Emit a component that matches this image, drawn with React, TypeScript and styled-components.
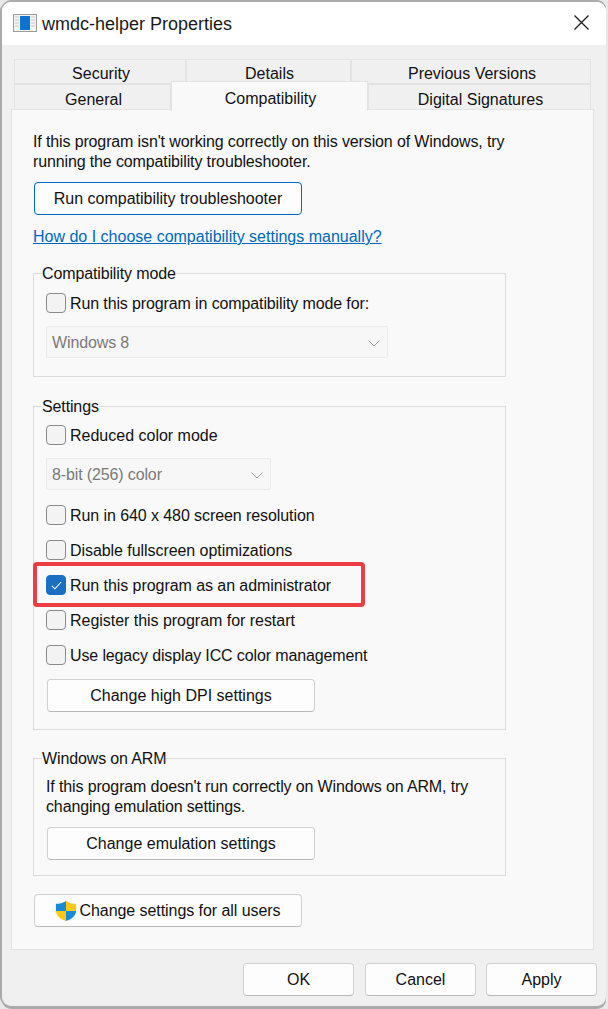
import styled, { createGlobalStyle } from "styled-components";

const GlobalStyle = createGlobalStyle`
	html, body {
		margin: 0;
		padding: 0;
		width: 608px;
		height: 1009px;
		overflow: hidden;
		background: #e8e8e8;
		font-family: "Liberation Sans", Arial, sans-serif;
		font-size: 16px;
		color: #111111;
	}
`;

const Window = styled.div`
	display: flex;
	flex-direction: column;
	box-sizing: border-box;
	width: 604px;
	height: 1004px;
	margin: 2px 0 0 2px;
	border-radius: 9px;
	background: #f0f0f0;
	box-shadow: -2px 0 0 #aaaaaa, 0 -2px 0 #aaaaaa, 0 3px 0 #aaaaaa;
	overflow: hidden;
`;

const TitleBar = styled.div`
	display: flex;
	align-items: center;
	box-sizing: border-box;
	height: 43px;
	padding: 0 17px 2px 11px;
	background: #ffffff;
`;

const Title = styled.span`
	flex: 1;
	margin-left: 5px;
	padding-top: 4px;
	font-size: 18px;
	color: #1a1a1a;
`;

const Content = styled.div`
	display: flex;
	flex-direction: column;
	flex: 1;
	padding: 14px 12px 10px 9px;
`;

const TabRow = styled.div`
	display: flex;
	height: 25px;
	padding: 0 3px;
`;

const LowerTabRow = styled(TabRow)`
	height: 26px;
`;

const Tab = styled.div<{ $width: number; $active?: boolean; $lower?: boolean }>`
	display: flex;
	align-items: center;
	justify-content: center;
	position: relative;
	z-index: ${(props) => (props.$active ? 1 : 0)};
	box-sizing: border-box;
	width: ${(props) => props.$width}px;
	height: ${(props) => (props.$active ? "30px" : "100%")};
	margin-top: ${(props) => (props.$active ? "-3px" : "0")};
	padding: ${(props) => (props.$lower ? "6px" : "4px")} 0 0 2px;
	border: 1px solid #e3e3e3;
	border-bottom: ${(props) => (props.$active ? "none" : "1px solid #e3e3e3")};
	background: ${(props) => (props.$active ? "#f9f9f9" : "#f0f0f0")};
	line-height: 24px;
	overflow: hidden;
`;

const Panel = styled.div`
	display: flex;
	flex-direction: column;
	align-items: flex-start;
	box-sizing: border-box;
	width: 583px;
	height: 841px;
	margin-top: -1px;
	padding: 22px 21px 0 21px;
	background: #f9f9f9;
	border: 1px solid #e3e3e3;
`;

const Paragraph = styled.p`
	margin: 0;
	line-height: 20px;
	letter-spacing: -0.13px;
`;

const Button = styled.button<{ $width: number; $primary?: boolean }>`
	display: flex;
	align-items: center;
	justify-content: center;
	box-sizing: border-box;
	width: ${(props) => props.$width}px;
	height: 33px;
	padding: 0;
	border: 1px solid ${(props) => (props.$primary ? "#0067c0" : "#d0d0d0")};
	border-bottom-color: ${(props) => (props.$primary ? "#0067c0" : "#b8b8b8")};
	border-radius: 4px;
	background: #fdfdfd;
	font-family: inherit;
	font-size: 16px;
	color: #111111;
`;

const TroubleshootButton = styled(Button)`
	margin: 10px 0 0 1px;
`;

const HelpLink = styled.a`
	margin-top: 12px;
	line-height: 20px;
	color: #0067c0;
	text-decoration: underline;
`;

const Group = styled.fieldset<{ $height: number; $top: number }>`
	display: flex;
	flex-direction: column;
	align-items: flex-start;
	box-sizing: border-box;
	width: 473px;
	height: ${(props) => props.$height}px;
	margin: ${(props) => props.$top}px 0 0 0;
	padding: 0 0 0 12px;
	border: 1px solid #dcdcdc;
`;

const Legend = styled.legend`
	margin-left: -4px;
	padding: 0;
	line-height: 20px;
	letter-spacing: -0.13px;
	transform: translateY(1px);
`;

const CheckRow = styled.div<{ $top: number }>`
	display: flex;
	align-items: center;
	gap: 4px;
	height: 20px;
	margin-top: ${(props) => props.$top}px;
`;

const CheckLabel = styled.span<{ $tracking: number }>`
	padding-top: 2px;
	letter-spacing: ${(props) => props.$tracking}px;
`;

const CheckBox = styled.span<{ $checked?: boolean }>`
	display: flex;
	align-items: center;
	justify-content: center;
	box-sizing: border-box;
	width: 20px;
	height: 20px;
	border: 1px solid ${(props) => (props.$checked ? "#1b6ec2" : "#8a8a8a")};
	border-radius: 4px;
	background: ${(props) => (props.$checked ? "#1b6ec2" : "#f3f3f3")};
`;

const Highlight = styled.div`
	position: relative;
`;

const HighlightFrame = styled.div`
	position: absolute;
	left: -13px;
	top: 2px;
	width: 332px;
	height: 45px;
	box-sizing: border-box;
	border: 4px solid #ea3e42;
	border-radius: 4px;
	pointer-events: none;
`;

const Select = styled.div<{ $width: number; $top: number }>`
	display: flex;
	align-items: center;
	justify-content: space-between;
	box-sizing: border-box;
	width: ${(props) => props.$width}px;
	height: 32px;
	margin-top: ${(props) => props.$top}px;
	padding: 2px 7px 0 5px;
	border: 1px solid #ebebeb;
	border-radius: 2px;
	background: #f7f7f7;
	letter-spacing: -0.13px;
	color: #7a7a7a;
`;

const GroupText = styled(Paragraph)`
	margin-top: 9px;
`;

const GroupButton = styled(Button)<{ $top: number }>`
	margin: ${(props) => props.$top}px 0 0 1px;
`;

const UsersButton = styled(Button)`
	gap: 2px;
	margin: 18px 0 0 1px;
	letter-spacing: -0.06px;
`;

const Footer = styled.div`
	display: flex;
	justify-content: flex-end;
	gap: 10px;
	margin: 13px -3px 0 0;
`;

const OkButton = styled(Button)`
	margin-right: 1px;
`;

const Chevron = () => (
	<svg width="12" height="7" viewBox="0 0 12 7" fill="none">
		<path d="M0.5 0.5 L6 6 L11.5 0.5" stroke="#9c9c9c" strokeWidth="1" />
	</svg>
);

const Tick = () => (
	<svg width="11" height="9" viewBox="0 0 11 9" fill="none">
		<path d="M0.8 4.8 L3.9 7.8 L10.2 1" stroke="#ffffff" strokeWidth="1.1" />
	</svg>
);

const CloseIcon = () => (
	<svg width="15" height="15" viewBox="0 0 15 15" fill="none">
		<path d="M0.5 0.5 L14.5 14.5 M14.5 0.5 L0.5 14.5" stroke="#1c1c1c" strokeWidth="1.3" />
	</svg>
);

const AppIcon = () => (
	<svg width="24" height="18" viewBox="0 0 24 18">
		<rect x="0.5" y="0.5" width="23" height="17" fill="#f4f4f4" stroke="#9a9a9a" />
		<path d="M2 3 h4 M2 6 h4 M2 9 h4 M2 12 h4 M18 3 h4 M18 6 h4 M18 9 h4 M18 12 h4" stroke="#c6c6c6" />
		<rect x="7" y="2" width="10" height="14" fill="#0a74d0" />
	</svg>
);

const ShieldIcon = () => (
	<svg width="22" height="22" viewBox="0 0 24 24">
		<path d="M12 1 C9 3 5 4.2 1 4.2 V12 H12 Z" fill="#1a8ad4" />
		<path d="M12 1 C15 3 19 4.2 23 4.2 V12 H12 Z" fill="#fdc915" />
		<path d="M1 12 C1.5 17.5 6 21 12 23 V12 Z" fill="#fdc915" />
		<path d="M23 12 C22.5 17.5 18 21 12 23 V12 Z" fill="#1a8ad4" />
	</svg>
);

const App = () => {
	return (
		<>
			<GlobalStyle />
			<Window>
				<TitleBar>
					<AppIcon />
					<Title>wmdc-helper Properties</Title>
					<CloseIcon />
				</TitleBar>
				<Content>
					<TabRow>
						<Tab $width={172}>Security</Tab>
						<Tab $width={165}>Details</Tab>
						<Tab $width={240}>Previous Versions</Tab>
					</TabRow>
					<LowerTabRow>
						<Tab $width={157} $lower>
							General
						</Tab>
						<Tab $width={197} $active>
							Compatibility
						</Tab>
						<Tab $width={223} $lower>
							Digital Signatures
						</Tab>
					</LowerTabRow>
					<Panel>
						<Paragraph>
							If this program isn't working correctly on this version of Windows, try
							<br />
							running the compatibility troubleshooter.
						</Paragraph>
						<TroubleshootButton $width={268} $primary>
							Run compatibility troubleshooter
						</TroubleshootButton>
						<HelpLink>How do I choose compatibility settings manually?</HelpLink>

						<Group $height={114} $top={16}>
							<Legend>Compatibility mode</Legend>
							<CheckRow $top={10}>
								<CheckBox />
								<CheckLabel $tracking={-0.12}>
									Run this program in compatibility mode for:
								</CheckLabel>
							</CheckRow>
							<Select $width={342} $top={13}>
								Windows 8
								<Chevron />
							</Select>
						</Group>

						<Group $height={334} $top={19}>
							<Legend>Settings</Legend>
							<CheckRow $top={9}>
								<CheckBox />
								<CheckLabel $tracking={0}>Reduced color mode</CheckLabel>
							</CheckRow>
							<Select $width={225} $top={13}>
								8-bit (256) color
								<Chevron />
							</Select>
							<CheckRow $top={15}>
								<CheckBox />
								<CheckLabel $tracking={-0.08}>Run in 640 x 480 screen resolution</CheckLabel>
							</CheckRow>
							<CheckRow $top={15}>
								<CheckBox />
								<CheckLabel $tracking={-0.06}>Disable fullscreen optimizations</CheckLabel>
							</CheckRow>
							<Highlight>
								<HighlightFrame />
								<CheckRow $top={15}>
									<CheckBox $checked>
										<Tick />
									</CheckBox>
									<CheckLabel $tracking={-0.06}>Run this program as an administrator</CheckLabel>
								</CheckRow>
							</Highlight>
							<CheckRow $top={15}>
								<CheckBox />
								<CheckLabel $tracking={-0.03}>Register this program for restart</CheckLabel>
							</CheckRow>
							<CheckRow $top={15}>
								<CheckBox />
								<CheckLabel $tracking={-0.13}>Use legacy display ICC color management</CheckLabel>
							</CheckRow>
							<GroupButton $width={268} $top={14}>
								Change high DPI settings
							</GroupButton>
						</Group>

						<Group $height={128} $top={18}>
							<Legend>Windows on ARM</Legend>
							<GroupText>
								If this program doesn't run correctly on Windows on ARM, try
								<br />
								changing emulation settings.
							</GroupText>
							<GroupButton $width={268} $top={10}>
								Change emulation settings
							</GroupButton>
						</Group>

						<UsersButton $width={268}>
							<ShieldIcon />
							Change settings for all users
						</UsersButton>
					</Panel>
					<Footer>
						<OkButton $width={111}>OK</OkButton>
						<Button $width={111}>Cancel</Button>
						<Button $width={111}>Apply</Button>
					</Footer>
				</Content>
			</Window>
		</>
	);
};

export default App;
